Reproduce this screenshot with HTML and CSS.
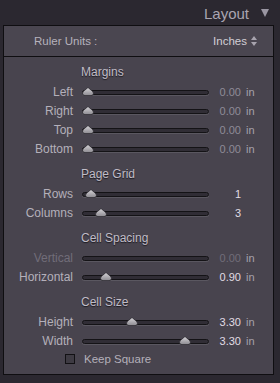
FILE: index.html
```html
<!DOCTYPE html>
<html lang="en">
<head>
  <meta charset="UTF-8">
  <meta name="viewport" content="width=device-width, initial-scale=1">
  <title>Layout</title>
  <link rel="stylesheet" href="styles.css">
</head>
<body>

  <div class="module-head">
    <span class="module-title">Layout</span>
    <svg class="collapse" width="8" height="8" viewBox="0 0 8 8">
      <path d="M0 0 L8 0 L4 8 Z" fill="#9a96a2"/>
    </svg>
  </div>

  <div class="panel">
    <div class="ruler-row">
      <span class="ruler-label">Ruler Units :</span>
      <span class="ruler-value">Inches
        <svg class="updown" width="6" height="10" viewBox="0 0 6 10">
          <path d="M3 0 L6 4 L0 4 Z M3 10 L6 6 L0 6 Z" fill="#a8a4ae"/>
        </svg>
      </span>
    </div>

    <div class="panel-body">
      <div class="group-title">Margins</div>
      <div class="slider-row">
        <span class="label">Left</span>
        <div class="slider"><div class="track"></div><svg class="thumb" style="left:0.5px" width="12" height="9" viewBox="0 0 12 9"><use href="#knob"/></svg></div>
        <span class="value dim">0.00</span><span class="unit">in</span>
      </div>
      <div class="slider-row">
        <span class="label">Right</span>
        <div class="slider"><div class="track"></div><svg class="thumb" style="left:0.5px" width="12" height="9" viewBox="0 0 12 9"><use href="#knob"/></svg></div>
        <span class="value dim">0.00</span><span class="unit">in</span>
      </div>
      <div class="slider-row">
        <span class="label">Top</span>
        <div class="slider"><div class="track"></div><svg class="thumb" style="left:0.5px" width="12" height="9" viewBox="0 0 12 9"><use href="#knob"/></svg></div>
        <span class="value dim">0.00</span><span class="unit">in</span>
      </div>
      <div class="slider-row">
        <span class="label">Bottom</span>
        <div class="slider"><div class="track"></div><svg class="thumb" style="left:0.5px" width="12" height="9" viewBox="0 0 12 9"><use href="#knob"/></svg></div>
        <span class="value dim">0.00</span><span class="unit">in</span>
      </div>

      <div class="group-title spaced">Page Grid</div>
      <div class="slider-row">
        <span class="label">Rows</span>
        <div class="slider"><div class="track"></div><svg class="thumb" style="left:4px" width="12" height="9" viewBox="0 0 12 9"><use href="#knob"/></svg></div>
        <span class="value">1</span><span class="unit"></span>
      </div>
      <div class="slider-row">
        <span class="label">Columns</span>
        <div class="slider"><div class="track"></div><svg class="thumb" style="left:14px" width="12" height="9" viewBox="0 0 12 9"><use href="#knob"/></svg></div>
        <span class="value">3</span><span class="unit"></span>
      </div>

      <div class="group-title spaced">Cell Spacing</div>
      <div class="slider-row disabled">
        <span class="label">Vertical</span>
        <div class="slider"><div class="track"></div></div>
        <span class="value dim">0.00</span><span class="unit">in</span>
      </div>
      <div class="slider-row">
        <span class="label">Horizontal</span>
        <div class="slider"><div class="track"></div><svg class="thumb" style="left:19px" width="12" height="9" viewBox="0 0 12 9"><use href="#knob"/></svg></div>
        <span class="value">0.90</span><span class="unit">in</span>
      </div>

      <div class="group-title spaced">Cell Size</div>
      <div class="slider-row">
        <span class="label">Height</span>
        <div class="slider"><div class="track"></div><svg class="thumb" style="left:45px" width="12" height="9" viewBox="0 0 12 9"><use href="#knob"/></svg></div>
        <span class="value">3.30</span><span class="unit">in</span>
      </div>
      <div class="slider-row">
        <span class="label">Width</span>
        <div class="slider"><div class="track"></div><svg class="thumb" style="left:97.5px" width="12" height="9" viewBox="0 0 12 9"><use href="#knob"/></svg></div>
        <span class="value">3.30</span><span class="unit">in</span>
      </div>

      <label class="check-row">
        <span class="checkbox"></span>
        <span class="check-label">Keep Square</span>
      </label>
    </div>
  </div>

  <!-- shared slider knob -->
  <svg width="0" height="0" class="defs">
    <defs>
      <linearGradient id="knobFill" x1="0" y1="0" x2="0" y2="1">
        <stop offset="0" stop-color="#d8d6da"/>
        <stop offset="1" stop-color="#8c8a90"/>
      </linearGradient>
      <symbol id="knob" viewBox="0 0 12 9">
        <path d="M6 0.4 C7.2 2.3 11.5 3.8 11.5 6.3 Q11.5 8.6 9 8.6 L3 8.6 Q0.5 8.6 0.5 6.3 C0.5 3.8 4.8 2.3 6 0.4 Z" fill="url(#knobFill)" stroke="#2c2a30" stroke-width="0.8"/>
      </symbol>
    </defs>
  </svg>

</body>
</html>
```

FILE: styles.css
```css
/* Basic Reset */
* { margin: 0; padding: 0; box-sizing: border-box; }
body {
  font-family: 'Liberation Sans', Arial, sans-serif;
  font-size: 12px;
  background: #2b2830;
  color: #b4b0ba;
  width: 280px;
  height: 383px;
  overflow: hidden;
}
.module-head {
  height: 25px;
  display: flex;
  align-items: center;
  justify-content: flex-end;
  padding: 1px 11px 0 0;
}
.module-title {
  font-size: 15px;
  color: #a9a5b1;
  margin-right: 12px;
}
.collapse {
  margin-top: -1px;
}
.panel {
  margin: 0 6px 0 3px;
  border: 1px solid #0f0e11;
  background: #48444e;
}
.ruler-row {
  height: 31px;
  display: flex;
  align-items: center;
  justify-content: space-between;
  padding: 0 16px 0 30px;
  border-bottom: 1px solid #0f0e11;
  background: #4a4650;
  color: #b6b2bc;
  font-size: 11.5px;
}
.ruler-value {
  display: flex;
  align-items: center;
  gap: 4px;
  color: #d2ced6;
}
.panel-body {
  padding: 5px 0 7px;
}
.group-title {
  height: 20px;
  line-height: 20px;
  padding-left: 77px;
  color: #c0bcc6;
  text-shadow: 0 1px 1px #1c1a20;
}
.group-title.spaced {
  margin-top: 6px;
}
.slider-row {
  height: 19px;
  display: grid;
  grid-template-columns: 77px 128px 32px 1fr;
  align-items: center;
}
.label {
  text-align: right;
  padding-right: 8px;
  color: #b4b0ba;
}
.slider {
  position: relative;
  height: 19px;
  display: flex;
  align-items: center;
  padding: 1px 0 0 1px;
}
.track {
  width: 127px;
  height: 5px;
  border-radius: 3px;
  background: #302d35;
  border: 1px solid #141316;
  box-shadow: 0 1px 0 rgba(255,255,255,0.1);
}
.thumb {
  position: absolute;
  top: 5px;
}
.value {
  text-align: right;
  font-size: 11px;
  color: #e0dce4;
}
.value.dim {
  color: #8f8b97;
}
.unit {
  font-size: 11px;
  padding-left: 5px;
  color: #a6a2ac;
}
.slider-row.disabled .label,
.slider-row.disabled .value {
  color: #716d79;
}
.check-row {
  height: 17px;
  display: flex;
  align-items: center;
  padding-left: 61px;
  gap: 9px;
}
.checkbox {
  width: 10px;
  height: 10px;
  border: 1px solid #121114;
  background: #3e3b43;
}
.check-label {
  font-size: 11.5px;
  color: #b4b0ba;
}
.defs {
  position: absolute;
}
```
